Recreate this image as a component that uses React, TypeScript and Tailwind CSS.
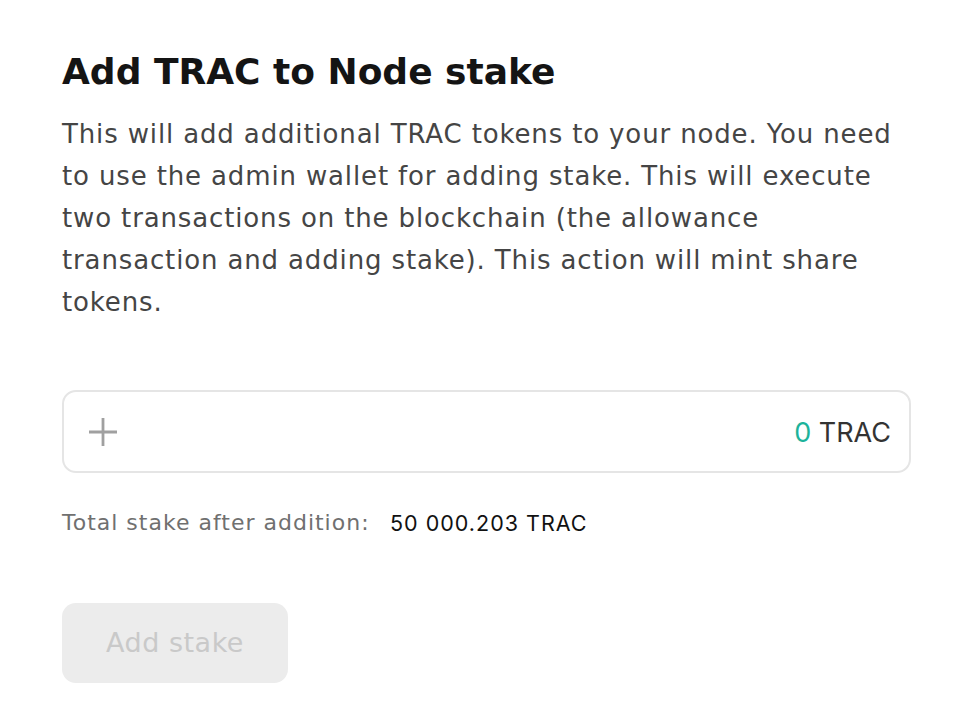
import React, { useState } from "react";

const sans = { fontFamily: '"DejaVu Sans", "Noto Sans", sans-serif' };
const inter = { fontFamily: "Inter, sans-serif" };

export default function App() {
  const [amount, setAmount] = useState("");

  return (
    <div className="min-h-screen bg-white" style={sans}>
      <section className="w-[849px] pl-[62px] pt-[46px] box-content">
        <h2 className="text-[36px] leading-[52px] font-bold text-[#141414]">
          Add TRAC to Node stake
        </h2>
        <p className="mt-[15px] w-[849px] text-[26px] leading-[42px] tracking-[0.86px] text-[#454545]">
          This will add additional TRAC tokens to your node. You need to use the admin wallet
          for adding stake. This will execute two transactions on the blockchain (the allowance
          transaction and adding stake). This action will mint share tokens.
        </p>

        {/* Campo cantidad */}
        <div className="mt-[67px] flex h-[83px] w-[849px] items-center rounded-[14px] border-2 border-[#e5e5e5] pl-[24px] pr-[18px]">
          <svg width="30" height="30" viewBox="0 0 30 30" className="shrink-0">
            <path d="M15 1v28M1 15h28" stroke="#a0a0a0" strokeWidth="2.8" />
          </svg>
          <input
            value={amount}
            onChange={(e) => setAmount(e.target.value)}
            className="flex-1 bg-transparent outline-none"
          />
          <span className="mt-[4px] text-[27px] text-[#333]" style={inter}>
            <span className="text-[#1db39b]">{amount || "0"}</span> TRAC
          </span>
        </div>

        <div className="mt-[34px] flex items-center text-[22px] leading-[32px]">
          <span className="w-[328px] tracking-[1px] text-[#707070]">Total stake after addition:</span>
          <span className="text-[21.5px] tracking-[1px] text-[#111]" style={inter}>
            50 000.203 TRAC
          </span>
        </div>

        <button
          disabled
          className="mt-[64px] h-[80px] w-[226px] rounded-[14px] bg-[#ececec] text-[27px] tracking-[0.5px] text-[#c9c9c9]"
        >
          Add stake
        </button>
      </section>
    </div>
  );
}
